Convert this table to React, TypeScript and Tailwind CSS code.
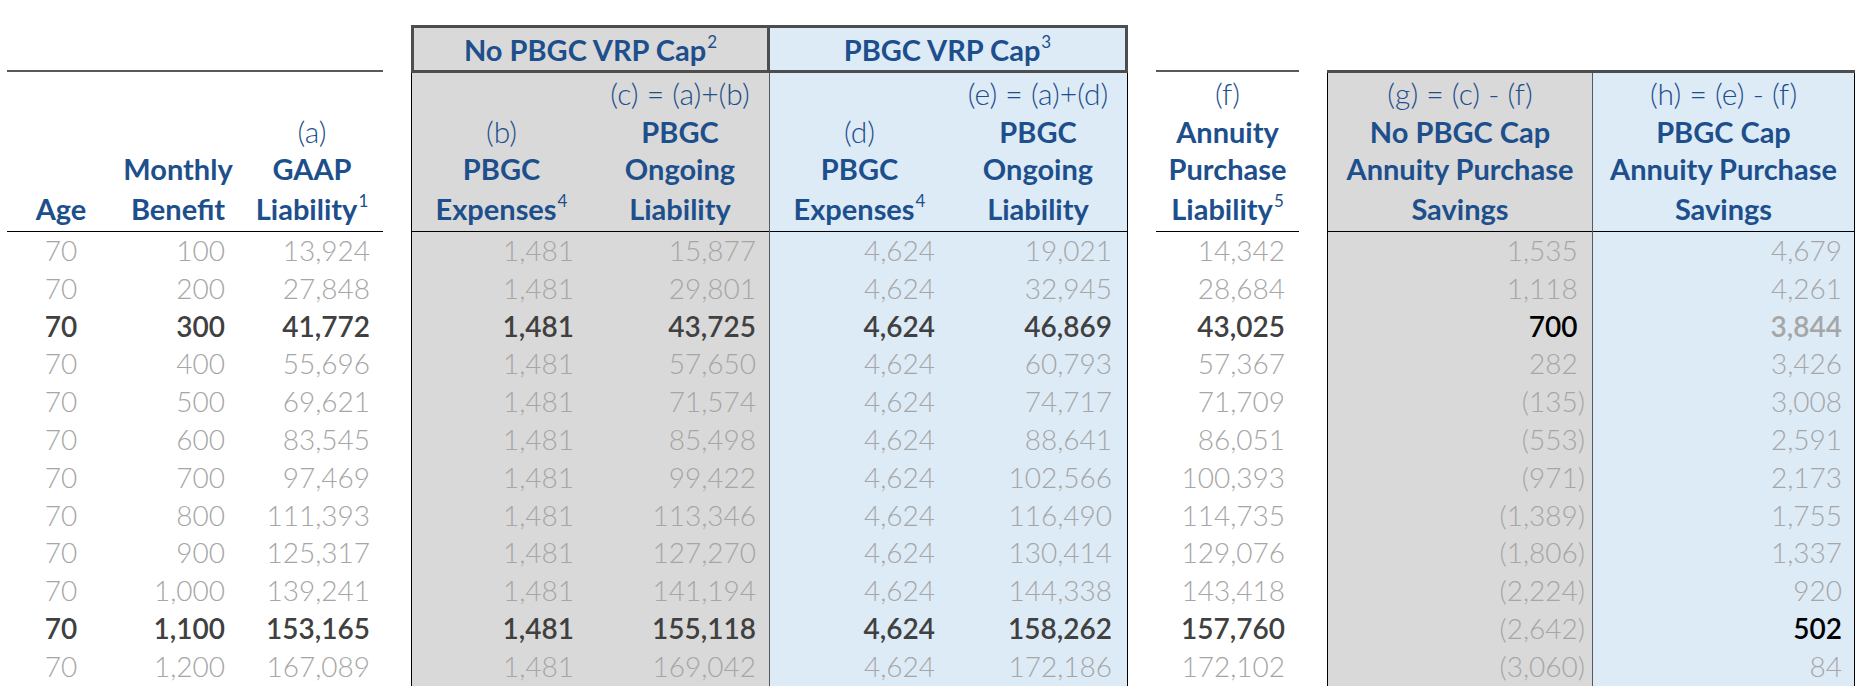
import { ReactNode } from "react";
import clsx from "clsx";

/* ============ STYLE TOKENS ============ */
const GRAY = "bg-[#d9d9d9]";
const BLUE = "bg-[#ddebf7]";
const LIGHT = "font-light text-[#a6a6a6]";
const DARK = "font-semibold text-[#404040]";
const BLACK = "font-semibold text-black";
const GRAY_BOLD = "font-semibold text-[#a6a6a6]";

/* four header line slots: heights match the sheet's row heights */
const SLOTS = [
  "h-[40px] leading-[40px]",
  "h-[37px] leading-[37px]",
  "h-[37px] leading-[37px]",
  "h-[44px] leading-[44px]",
];

function Sup({ n }: { n: string }) {
  return <span className="relative -top-[13px] ml-px text-[17px] font-normal">{n}</span>;
}

function Label({ children }: { children: ReactNode }) {
  return <span className="text-[30px] font-light">{children}</span>;
}

function Bold({ children, sup }: { children: ReactNode; sup?: string }) {
  return (
    <span className="text-[29px] font-bold">
      {children}
      {sup && <Sup n={sup} />}
    </span>
  );
}

type Col = {
  w: string;
  pr?: string;
  center?: boolean;
  acct?: boolean;
  head: (ReactNode | null)[];
  data: string[];
  emph?: Record<number, string>;
};

const ROWS_EMPH = { 2: DARK, 10: DARK };

/* ============ ONE COLUMN: header lines, rule, values ============ */
function Column({ col }: { col: Col }) {
  return (
    <div className={clsx("flex flex-col", col.w)}>
      <div className="flex flex-col border-b border-black">
        {col.head.map((h, i) => (
          <div key={i} className={clsx("whitespace-nowrap text-center", SLOTS[i])}>
            {h}
          </div>
        ))}
      </div>
      {col.data.map((v, r) => (
        <div
          key={r}
          className={clsx(
            "h-[37.8px] whitespace-nowrap text-[28px] leading-[37.8px]",
            col.center ? "text-center" : "text-right",
            col.pr,
            col.emph?.[r] ?? LIGHT,
          )}
        >
          {v}
          {col.acct && !v.startsWith("(") && <span className="invisible">)</span>}
        </div>
      ))}
    </div>
  );
}

const rep = (v: string) => Array.from({ length: 12 }, () => v);

const age: Col = {
  w: "w-[108px]",
  center: true,
  head: [null, null, null, <Bold>Age</Bold>],
  data: rep("70"),
  emph: ROWS_EMPH,
};
const monthly: Col = {
  w: "w-[126px]",
  pr: "pr-[16px]",
  head: [null, null, <Bold>Monthly</Bold>, <Bold>Benefit</Bold>],
  data: ["100", "200", "300", "400", "500", "600", "700", "800", "900", "1,000", "1,100", "1,200"],
  emph: ROWS_EMPH,
};
const gaap: Col = {
  w: "w-[142px]",
  pr: "pr-[13px]",
  head: [null, <Label>(a)</Label>, <Bold>GAAP</Bold>, <Bold sup="1">Liability</Bold>],
  data: ["13,924", "27,848", "41,772", "55,696", "69,621", "83,545", "97,469", "111,393", "125,317", "139,241", "153,165", "167,089"],
  emph: ROWS_EMPH,
};
const colB: Col = {
  w: "w-[179px]",
  pr: "pr-[17px]",
  head: [null, <Label>(b)</Label>, <Bold>PBGC</Bold>, <Bold sup="4">Expenses</Bold>],
  data: rep("1,481"),
  emph: ROWS_EMPH,
};
const colC: Col = {
  w: "w-[178px]",
  pr: "pr-[13px]",
  head: [<Label>(c) = (a)+(b)</Label>, <Bold>PBGC</Bold>, <Bold>Ongoing</Bold>, <Bold>Liability</Bold>],
  data: ["15,877", "29,801", "43,725", "57,650", "71,574", "85,498", "99,422", "113,346", "127,270", "141,194", "155,118", "169,042"],
  emph: ROWS_EMPH,
};
const colD: Col = {
  w: "w-[179px]",
  pr: "pr-[14px]",
  head: [null, <Label>(d)</Label>, <Bold>PBGC</Bold>, <Bold sup="4">Expenses</Bold>],
  data: rep("4,624"),
  emph: ROWS_EMPH,
};
const colE: Col = {
  w: "w-[178px]",
  pr: "pr-[15px]",
  head: [<Label>(e) = (a)+(d)</Label>, <Bold>PBGC</Bold>, <Bold>Ongoing</Bold>, <Bold>Liability</Bold>],
  data: ["19,021", "32,945", "46,869", "60,793", "74,717", "88,641", "102,566", "116,490", "130,414", "144,338", "158,262", "172,186"],
  emph: ROWS_EMPH,
};
const colF: Col = {
  w: "w-[143px]",
  pr: "pr-[14px]",
  head: [<Label>(f)</Label>, <Bold>Annuity</Bold>, <Bold>Purchase</Bold>, <Bold sup="5">Liability</Bold>],
  data: ["14,342", "28,684", "43,025", "57,367", "71,709", "86,051", "100,393", "114,735", "129,076", "143,418", "157,760", "172,102"],
  emph: ROWS_EMPH,
};
const colG: Col = {
  w: "w-[264px]",
  pr: "pr-[7px]",
  acct: true,
  head: [<Label>(g) = (c) - (f)</Label>, <Bold>No PBGC Cap</Bold>, <Bold>Annuity Purchase</Bold>, <Bold>Savings</Bold>],
  data: ["1,535", "1,118", "700", "282", "(135)", "(553)", "(971)", "(1,389)", "(1,806)", "(2,224)", "(2,642)", "(3,060)"],
  emph: { 2: BLACK },
};
const colH: Col = {
  w: "w-[261px]",
  pr: "pr-[12px]",
  head: [<Label>(h) = (e) - (f)</Label>, <Bold>PBGC Cap</Bold>, <Bold>Annuity Purchase</Bold>, <Bold>Savings</Bold>],
  data: ["4,679", "4,261", "3,844", "3,426", "3,008", "2,591", "2,173", "1,755", "1,337", "920", "502", "84"],
  emph: { 2: GRAY_BOLD, 10: BLACK },
};

export default function App() {
  return (
    <div className="flex h-[700px] w-[1872px] bg-white pl-[7px] text-[#1d4f8c] [font-family:Lato,'Open_Sans',sans-serif]">
      {/* Age / Monthly / GAAP */}
      <div className="flex flex-col">
        <div className="h-[72px] border-b-2 border-[#595959]" />
        <div className="flex pt-px">
          <Column col={age} />
          <Column col={monthly} />
          <Column col={gaap} />
        </div>
      </div>

      {/* No cap / cap groups */}
      <div className="ml-[28px] flex flex-col pt-[25px]">
        <div className="flex h-[48px]">
          <div className={clsx("w-[359px] border-[3px] border-[#4d4d4d] text-center leading-[44px]", GRAY)}>
            <Bold sup="2">No PBGC VRP Cap</Bold>
          </div>
          <div className={clsx("w-[358px] border-[3px] border-l-0 border-[#4d4d4d] text-center leading-[44px]", BLUE)}>
            <Bold sup="3">PBGC VRP Cap</Bold>
          </div>
        </div>
        <div className="flex">
          <div className={clsx("flex border-r border-l border-r-[#595959] border-l-black", GRAY)}>
            <Column col={colB} />
            <Column col={colC} />
          </div>
          <div className={clsx("flex border-r border-black", BLUE)}>
            <Column col={colD} />
            <Column col={colE} />
          </div>
        </div>
      </div>

      {/* Annuity purchase liability */}
      <div className="ml-[28px] flex flex-col">
        <div className="h-[72px] border-b-2 border-[#595959]" />
        <div className="flex pt-px">
          <Column col={colF} />
        </div>
      </div>

      {/* Savings */}
      <div className="ml-[28px] flex flex-col pt-[70px]">
        <div className="h-[3px] bg-[#4d4d4d]" />
        <div className="flex border-r border-l border-black">
          <div className={clsx("flex border-r border-[#595959]", GRAY)}>
            <Column col={colG} />
          </div>
          <div className={clsx("flex", BLUE)}>
            <Column col={colH} />
          </div>
        </div>
      </div>
    </div>
  );
}
